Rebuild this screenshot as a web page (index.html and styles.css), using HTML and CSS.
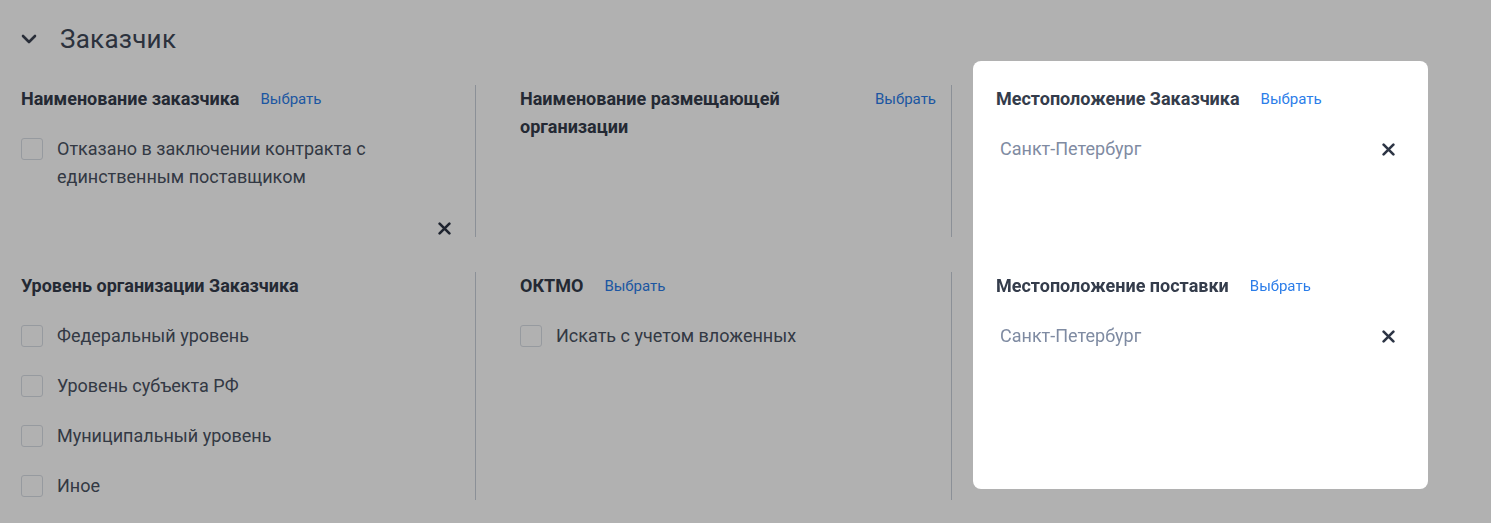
FILE: index.html
```html
<!DOCTYPE html>
<html lang="ru">
<head>
  <meta charset="UTF-8" />
  <meta name="viewport" content="width=device-width, initial-scale=1.0"/>
  <title>Заказчик</title>
  <link rel="stylesheet" href="styles.css">
</head>
<body>

  <div class="section">
    <div class="section-head">
      <svg class="chevron" width="16" height="10" viewBox="0 0 16 10"><path d="M2 2l6 6 6-6" fill="none" stroke="#3b4352" stroke-width="2.6" stroke-linecap="round" stroke-linejoin="round"/></svg>
      <h2>Заказчик</h2>
    </div>

    <div class="grid">
      <!-- Наименование заказчика -->
      <div class="cell first">
        <div class="cell-head">
          <span class="label">Наименование заказчика</span>
          <a class="pick">Выбрать</a>
        </div>
        <label class="check">
          <span class="box"></span>
          <span>Отказано в заключении контракта с единственным поставщиком</span>
        </label>
        <div class="clear-row">
          <svg class="cross" width="13" height="13" viewBox="0 0 12 12"><path d="M1.5 1.5l9 9M10.5 1.5l-9 9" stroke="#2d3545" stroke-width="2.4" stroke-linecap="round"/></svg>
        </div>
      </div>

      <!-- Размещающая организация -->
      <div class="cell">
        <div class="cell-head spread">
          <span class="label narrow">Наименование размещающей организации</span>
          <a class="pick">Выбрать</a>
        </div>
      </div>

      <!-- Местоположение (выделено) -->
      <div class="card">
        <div class="card-part">
          <div class="cell-head">
            <span class="label">Местоположение Заказчика</span>
            <a class="pick">Выбрать</a>
          </div>
          <div class="value">
            <span>Санкт-Петербург</span>
            <svg class="cross" width="13" height="13" viewBox="0 0 12 12"><path d="M1.5 1.5l9 9M10.5 1.5l-9 9" stroke="#2d3545" stroke-width="2.4" stroke-linecap="round"/></svg>
          </div>
        </div>
        <div class="card-part">
          <div class="cell-head">
            <span class="label">Местоположение поставки</span>
            <a class="pick">Выбрать</a>
          </div>
          <div class="value">
            <span>Санкт-Петербург</span>
            <svg class="cross" width="13" height="13" viewBox="0 0 12 12"><path d="M1.5 1.5l9 9M10.5 1.5l-9 9" stroke="#2d3545" stroke-width="2.4" stroke-linecap="round"/></svg>
          </div>
        </div>
      </div>

      <!-- Уровень организации -->
      <div class="cell first">
        <div class="cell-head">
          <span class="label">Уровень организации Заказчика</span>
        </div>
        <label class="check"><span class="box"></span><span>Федеральный уровень</span></label>
        <label class="check"><span class="box"></span><span>Уровень субъекта РФ</span></label>
        <label class="check"><span class="box"></span><span>Муниципальный уровень</span></label>
        <label class="check"><span class="box"></span><span>Иное</span></label>
      </div>

      <!-- ОКТМО -->
      <div class="cell">
        <div class="cell-head">
          <span class="label">ОКТМО</span>
          <a class="pick">Выбрать</a>
        </div>
        <label class="check"><span class="box"></span><span>Искать с учетом вложенных</span></label>
      </div>
    </div>
  </div>

  <div class="shade"></div>

</body>
</html>
```

FILE: styles.css
```css
* { box-sizing: border-box; margin: 0; padding: 0; }
body {
  font-family: Roboto, 'Noto Sans', sans-serif;
  background: #fff;
  color: #3c4454;
  overflow: hidden;
}
.section { padding: 0 0 0 21px; }
.section-head {
  display: flex; align-items: center;
  height: 80px; padding-bottom: 2px;
}
.chevron { width: 16px; }
.section-head h2 {
  font-size: 26px; font-weight: 400; color: #404858;
  margin-left: 23px; letter-spacing: 0.25px;
}

.grid {
  display: grid;
  grid-template-columns: 455px 455px 455px;
  grid-template-rows: 152px 228px;
  column-gap: 21px; row-gap: 35px;
  margin-top: 5px;
}
.cell {
  border-right: 1px solid #c9d0da;
  padding: 0 15px 0 23px;
}
.cell.first { padding-left: 0; padding-right: 24px; }

.cell-head {
  display: flex; align-items: flex-start; gap: 21px;
  min-height: 28px;
}
.cell-head.spread { justify-content: space-between; }
.label {
  font-size: 18px; font-weight: 700; line-height: 28px;
  color: #343c4b;
}
.label.narrow { max-width: 280px; }
.pick {
  font-size: 15px; line-height: 28px; color: #2b7de9;
  cursor: pointer; white-space: nowrap;
}

.check {
  display: flex; align-items: flex-start; gap: 14px;
  font-size: 18px; line-height: 28px; color: #4a5262;
  margin-top: 22px;
}
.check .box {
  flex: none; width: 22px; height: 22px; margin-top: 3px;
  border: 1px solid #d9dee5; border-radius: 3px; background: #fff;
}
.clear-row { display: flex; justify-content: flex-end; margin-top: 31px; }

.card {
  grid-column: 3; grid-row: 1 / span 2;
  margin: -24px 0 11px;
  padding: 24px 33px 0 23px;
  background: #fff; border-radius: 8px;
  position: relative; z-index: 2;
  display: grid; grid-template-rows: 152px auto; row-gap: 35px;
}
.value {
  display: flex; justify-content: space-between; align-items: center;
  font-size: 18px; line-height: 28px; color: #7f8ba2;
  margin-top: 22px; padding-left: 4px;
}

.shade {
  position: fixed; inset: 0;
  background: rgba(0, 0, 0, 0.305);
  z-index: 1;
}
```
